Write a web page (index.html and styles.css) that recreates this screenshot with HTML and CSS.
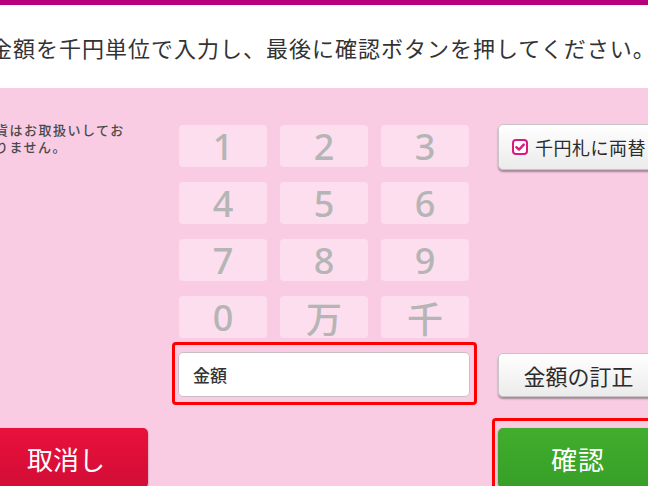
FILE: index.html
```html
<!DOCTYPE html>
<html lang="ja">
<head>
  <meta charset="UTF-8">
  <meta name="viewport" content="width=device-width, initial-scale=1.0">
  <title>金額入力</title>
  <link rel="stylesheet" href="styles.css">
</head>
<body>

  <div class="topbar"></div>

  <div class="title">
    <p>金額を千円単位で入力し、最後に確認ボタンを押してください。</p>
  </div>

  <div class="main">
    <div class="panel">
      <div class="note">硬貨はお取扱いしておりません。</div>

      <div class="entry">
        <div class="keypad">
          <div class="key">1</div>
          <div class="key">2</div>
          <div class="key">3</div>
          <div class="key">4</div>
          <div class="key">5</div>
          <div class="key">6</div>
          <div class="key">7</div>
          <div class="key">8</div>
          <div class="key">9</div>
          <div class="key">0</div>
          <div class="key">万</div>
          <div class="key">千</div>
        </div>
        <div class="amount-box">
          <div class="amount-field">金額</div>
        </div>
      </div>

      <div class="side">
        <div class="btn btn-exchange">
          <svg width="16" height="16" viewBox="0 0 16 16">
            <rect x="1" y="1" width="14" height="14" rx="3" fill="#fff" stroke="#d81b7f" stroke-width="2"/>
            <path d="M4.3 8.2 L7 10.6 L11.8 5.6" fill="none" stroke="#d81b7f" stroke-width="2.4" stroke-linecap="round" stroke-linejoin="round"/>
          </svg>
          <span>千円札に両替</span>
        </div>
        <div class="btn btn-correct">金額の訂正</div>
      </div>
    </div>

    <div class="actions">
      <div class="btn-cancel">取消し</div>
      <div class="confirm-box">
        <div class="btn-confirm">確認</div>
      </div>
    </div>
  </div>

</body>
</html>
```

FILE: styles.css
```css
html, body {
  margin: 0;
  padding: 0;
  width: 648px;
  height: 486px;
  overflow: hidden;
}
body {
  font-family: "Noto Sans CJK JP", sans-serif;
  color: #333;
  background-color: #f9cce4;
}
.topbar {
  height: 5px;
  background-color: #b6007b;
}
.title {
  height: 83px;
  background-color: #fff;
  display: flex;
  align-items: center;
}
.title p {
  margin: 0 0 0 -10px;
  font-size: 22px;
  letter-spacing: 1px;
  white-space: nowrap;
  color: #333;
}
.main {
  padding-top: 36px;
}
.panel, .actions {
  display: grid;
  grid-template-columns: 157px 305px 1fr;
  column-gap: 15px;
}
.note {
  margin: -3px 0 0 -5px;
  width: 136px;
  text-indent: -14.5px;
  font-size: 13px;
  letter-spacing: 1.5px;
  line-height: 17px;
  color: #4a4a4a;
  font-weight: 500;
}
.keypad {
  display: grid;
  grid-template-columns: repeat(3, 88px);
  grid-auto-rows: 42px;
  gap: 15px 13px;
  padding: 1px 8px 0 7px;
}
.key {
  background-color: #fcdeee;
  border-radius: 4px;
  display: flex;
  align-items: center;
  justify-content: center;
  font-family: "Noto Sans", "Noto Sans CJK JP", sans-serif;
  font-size: 36px;
  font-weight: 500;
  color: #b5b5b5;
}
.amount-box {
  margin-top: 4px;
  border: 3px solid #f00;
  border-radius: 4px;
  padding: 7px 4px 5px 3px;
}
.amount-field {
  height: 43px;
  background-color: #fff;
  border: 1px solid #c9c0c6;
  border-radius: 5px;
  display: flex;
  align-items: center;
  padding-left: 14px;
  font-size: 17px;
  font-weight: 500;
  color: #333;
}
.side {
  display: flex;
  flex-direction: column;
  justify-content: space-between;
  align-items: flex-start;
  padding: 0 0 8px 6px;
}
.btn {
  flex-shrink: 0;
  box-sizing: border-box;
  background: linear-gradient(#ffffff, #ebebeb);
  border: 1px solid #c6c6c6;
  border-radius: 5px;
  box-shadow: 0 2px 2px rgba(0, 0, 0, 0.35);
  display: flex;
  align-items: center;
  color: #2b2b2b;
  white-space: nowrap;
}
.btn-exchange {
  width: 170px;
  height: 46px;
  padding-left: 13px;
  gap: 7px;
  font-size: 18px;
  letter-spacing: 0.5px;
}
.btn-exchange svg {
  flex-shrink: 0;
}
.btn-correct {
  width: 161px;
  height: 44px;
  justify-content: center;
  font-size: 22px;
}
.btn-cancel {
  margin: 23px 0 0 -16px;
  width: 164px;
  height: 60px;
  background: linear-gradient(#e8113c, #d20d36);
  border-radius: 5px;
  box-shadow: 0 1px 2px rgba(0, 0, 0, 0.4);
  display: flex;
  align-items: center;
  justify-content: center;
  font-size: 26px;
  color: #fff;
}
.confirm-box {
  grid-column: 3;
  margin-top: 13px;
  width: 200px;
  height: 70px;
  border: 3px solid #f00;
  border-bottom: none;
  border-radius: 4px 4px 0 0;
  padding: 7px 0 0 3px;
}
.btn-confirm {
  width: 160px;
  height: 60px;
  background: linear-gradient(#41ad2d, #379f27);
  border-radius: 5px;
  box-shadow: 0 1px 2px rgba(0, 0, 0, 0.4);
  display: flex;
  align-items: center;
  justify-content: center;
  font-size: 26px;
  letter-spacing: 1px;
  color: #fff;
}
```
